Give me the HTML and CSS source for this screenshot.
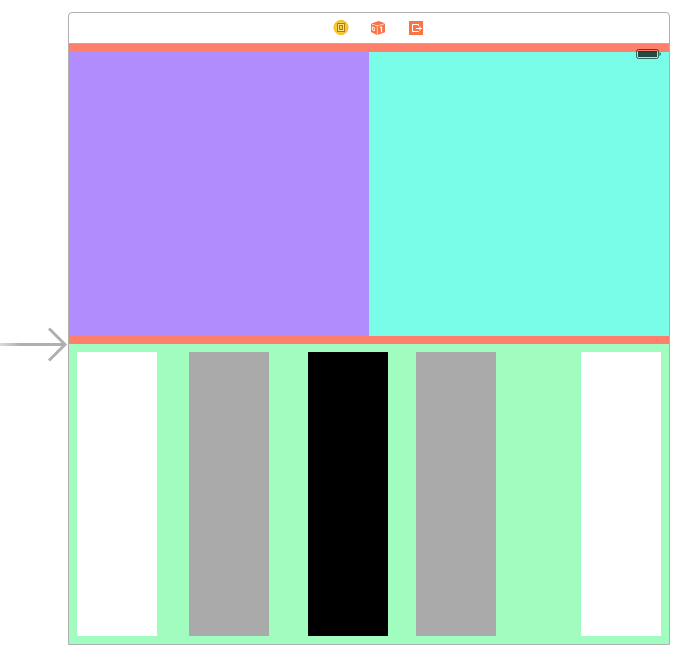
FILE: index.html
```html
<!DOCTYPE html>
<html lang="en">
<head>
<meta charset="utf-8">
<title>Scene</title>
<link rel="stylesheet" href="styles.css">
</head>
<body>
<main class="canvas">
  <svg class="entry-arrow" width="68" height="40" viewBox="0 0 68 40">
    <defs><linearGradient id="fade" gradientUnits="userSpaceOnUse" x1="0" x2="20" y1="0" y2="0"><stop offset="0" stop-color="#b0b0b0" stop-opacity=".45"/><stop offset="1" stop-color="#b0b0b0"/></linearGradient></defs>
    <rect x="0" y="18" width="65" height="3" fill="url(#fade)"/>
    <path d="M49 3.5 65 19.5 49 35.5" fill="none" stroke="#b0b0b0" stroke-width="3"/>
  </svg>
  <section class="scene">
    <header class="dock">
      <svg width="16" height="16" viewBox="0 0 16 16">
        <circle cx="9" cy="7.5" r="7.4" fill="#fbcb37"/>
        <circle cx="9" cy="7.5" r="6.9" fill="none" stroke="#f0bb2d"/>
        <rect x="5.5" y="3.5" width="7" height="8" fill="#fde487" stroke="#a67d1f"/>
        <rect x="7.5" y="5.5" width="3" height="4" fill="#fbcb37" stroke="#a67d1f"/>
      </svg>
      <svg width="16" height="16" viewBox="0 0 16 16">
        <path d="M1 3.4 8.7 1 15 3.3 7.4 5.4Z" fill="#f97345"/>
        <path d="M1 4.1 6.9 6V15L1 12Z" fill="#f97345"/>
        <path d="M7.5 6 15 4V12.3L7.5 15Z" fill="#f97345"/>
        <path d="M2.4 6.8v3.2l1.9.9V7.7Z" fill="none" stroke="#fff" stroke-width=".9"/>
        <path d="M10 7.7 11.5 7V12.2" fill="none" stroke="#fff" stroke-width="1.3"/>
      </svg>
      <svg width="16" height="16" viewBox="0 0 16 16">
        <rect x="1" y="1" width="14" height="14" fill="#f97345"/>
        <path d="M10.5 6V4.5h-6v7h6V11" fill="none" stroke="#fff"/>
        <path d="M8 8.5h6M12 6.5v4" fill="none" stroke="#fff"/>
      </svg>
    </header>
    <div class="top-view">
      <div class="purple"></div>
      <div class="aqua"></div>
      <svg class="battery" width="26" height="11" viewBox="0 0 26 11">
        <rect x=".5" y=".5" width="22" height="9" rx="2" fill="none" stroke="#000" stroke-opacity=".6"/>
        <rect x="2" y="2" width="19" height="6" rx=".5" fill="#000" fill-opacity=".7"/>
        <path d="M23.5 3q1.3.3 1.3 2T23.5 7Z" fill="#000" fill-opacity=".7"/>
      </svg>
    </div>
    <div class="bottom-view">
      <div class="key white"></div>
      <div class="key gray"></div>
      <div class="key black"></div>
      <div class="key gray"></div>
      <div class="key white"></div>
    </div>
  </section>
</main>
</body>
</html>
```
FILE: styles.css
```css
body {
  margin: 0;
  background: #fff;
}

.canvas {
  box-sizing: border-box;
  display: flex;
  align-items: flex-start;
  width: 682px;
  height: 656px;
  padding-top: 12px;
}

.entry-arrow {
  flex: none;
  margin-top: 313px;
}

.scene {
  box-sizing: border-box;
  width: 602px;
  height: 633px;
  border: 1px solid #b0b0b0;
  border-radius: 4px 4px 0 0;
  overflow: hidden;
}

.dock {
  box-sizing: border-box;
  display: flex;
  justify-content: center;
  align-items: center;
  gap: 22px;
  height: 31px;
  padding-left: 18px;
  border-bottom: 1px solid #b0b0b0;
}

.dock svg {
  overflow: visible;
}

.top-view {
  position: relative;
  box-sizing: border-box;
  display: grid;
  grid-template-columns: 1fr 1fr;
  height: 300px;
  padding: 8px 0;
  background: #ff7f6d;
}

.purple {
  background: #b18cfd;
}

.aqua {
  background: #79fde8;
}

.battery {
  position: absolute;
  top: 5px;
  right: 7px;
}

.bottom-view {
  box-sizing: border-box;
  display: grid;
  grid-template-columns: 112px 119px 108px 165px 80px;
  height: 300px;
  padding: 8px;
  background: #a1fcbf;
}

.key {
  width: 80px;
}

.white {
  background: #fff;
}

.gray {
  background: #aaa;
}

.black {
  background: #000;
}
```
